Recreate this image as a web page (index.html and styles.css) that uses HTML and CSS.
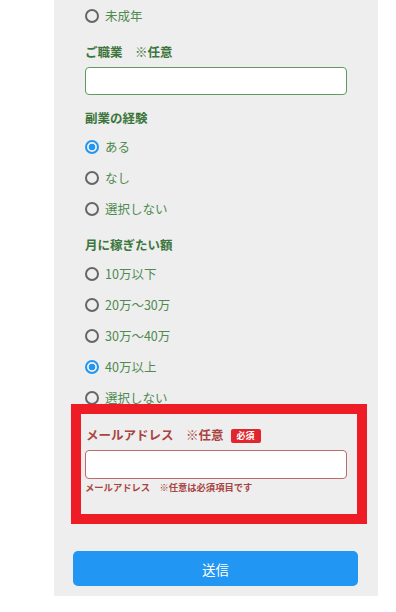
FILE: index.html
```html
<!doctype html>
<html lang="ja">
<head>
  <meta charset="utf-8">
  <title>お問い合わせフォーム</title>
  <link rel="stylesheet" href="styles.css">
</head>
<body>
  <form class="panel">
    <label class="choice"><input type="radio" name="age"><span>未成年</span></label>

    <label class="field-label" for="job">ご職業　※任意</label>
    <input type="text" id="job" class="text-input">

    <div class="field-label">副業の経験</div>
    <label class="choice"><input type="radio" name="side" checked><span>ある</span></label>
    <label class="choice"><input type="radio" name="side"><span>なし</span></label>
    <label class="choice"><input type="radio" name="side"><span>選択しない</span></label>

    <div class="field-label">月に稼ぎたい額</div>
    <label class="choice"><input type="radio" name="amount"><span>10万以下</span></label>
    <label class="choice"><input type="radio" name="amount"><span>20万〜30万</span></label>
    <label class="choice"><input type="radio" name="amount"><span>30万〜40万</span></label>
    <label class="choice"><input type="radio" name="amount" checked><span>40万以上</span></label>
    <label class="choice"><input type="radio" name="amount"><span>選択しない</span></label>

    <div class="highlight">
      <label class="field-label error" for="mail">メールアドレス　※任意<span class="badge">必須</span></label>
      <input type="text" id="mail" class="text-input error">
      <p class="error-msg">メールアドレス　※任意は必須項目です</p>
    </div>

    <button type="button" class="submit">送信</button>
  </form>
</body>
</html>
```

FILE: styles.css
```css
* {
  box-sizing: border-box;
}

body {
  margin: 0;
  background: #fff;
  font-family: "Noto Sans CJK JP", "Noto Sans", sans-serif;
}

.panel {
  display: block;
  width: 324px;
  margin-left: 54px;
  background: #eeeeee;
  padding: 0 31px 10px;
}

.choice {
  display: flex;
  align-items: center;
  height: 31px;
  font-size: 12.5px;
  color: #4f8a50;
}

.choice input {
  appearance: none;
  -webkit-appearance: none;
  width: 14px;
  height: 14px;
  margin: 0 6px 0 0;
  border: 2px solid #666;
  border-radius: 50%;
  background: #eee;
}

.choice input:checked {
  border-color: #2196f3;
  background: radial-gradient(circle, #2196f3 0 3px, #eee 3.6px);
}

.field-label {
  display: block;
  margin: 12px 0 4px;
  font-size: 12.5px;
  font-weight: bold;
  line-height: 18px;
  color: #3c763d;
}

/* margins collapse with the labels around it */
.text-input {
  display: block;
  width: 100%;
  height: 28px;
  margin: 6px 0 14px;
  border: 1px solid #5f9a60;
  border-radius: 4px;
  background: #fff;
}

.highlight {
  margin: -9px -20px 0 -14px;
  padding: 0 10px 21px 4px;
  border: 10px solid #ee1c25;
  position: relative;
}

.field-label.error {
  color: #a94442;
  padding-left: 1px;
}

.badge {
  display: inline-block;
  margin-left: 7px;
  padding: 1px 6px;
  border-radius: 2px;
  background: #e1252c;
  color: #fff;
  font-size: 9px;
  line-height: 12px;
  vertical-align: 1px;
}

.text-input.error {
  height: 29px;
  margin-bottom: 2px;
  border-color: #bf6a6a;
}

.error-msg {
  margin: 0;
  font-size: 9.3px;
  font-weight: bold;
  line-height: 12px;
  color: #a94442;
}

.submit {
  display: block;
  width: calc(100% + 23px);
  height: 35px;
  margin: 27px 0 0 -12px;
  border: none;
  border-radius: 5px;
  background: #2196f3;
  color: #fff;
  font-family: inherit;
  font-size: 13.5px;
}
```
